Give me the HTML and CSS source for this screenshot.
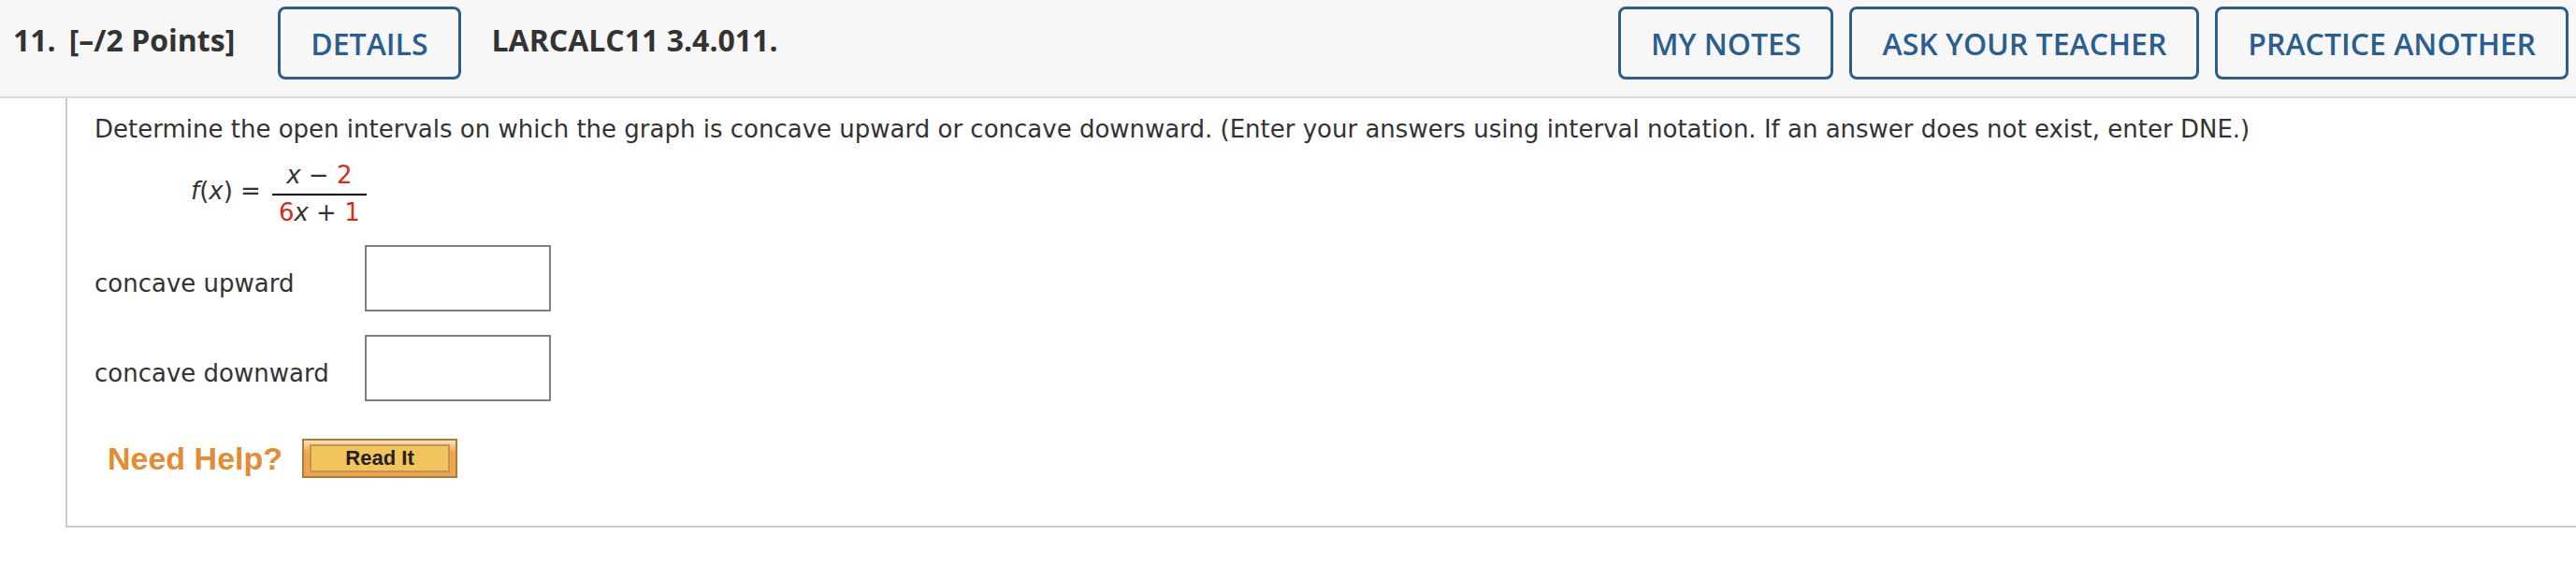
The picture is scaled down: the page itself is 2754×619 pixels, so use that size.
FILE: index.html
```html
<!DOCTYPE html>
<html lang="en">
<head>
    <meta charset="UTF-8">
    <meta name="viewport" content="width=device-width, initial-scale=1.0">
    <title>Question 11</title>
    <link rel="stylesheet" href="styles.css">
</head>
<body>
    <div class="question-header">
        <span class="q-number">11.</span>
        <span class="q-points">[&ndash;/2 Points]</span>
        <button class="header-btn details-btn">DETAILS</button>
        <span class="q-code">LARCALC11 3.4.011.</span>
        <div class="header-actions">
            <button class="header-btn">MY NOTES</button>
            <button class="header-btn">ASK YOUR TEACHER</button>
            <button class="header-btn">PRACTICE ANOTHER</button>
        </div>
    </div>

    <div class="question-body">
        <p class="prompt">Determine the open intervals on which the graph is concave upward or concave downward. (Enter your answers using interval notation. If an answer does not exist, enter DNE.)</p>

        <div class="formula">
            <span class="fx"><i>f</i>(<i>x</i>) =</span>
            <span class="fraction">
                <span class="num"><i>x</i> &minus; <span class="red">2</span></span>
                <span class="bar"></span>
                <span class="den"><span class="red">6</span><i>x</i> + <span class="red">1</span></span>
            </span>
        </div>

        <div class="answer-row">
            <label>concave upward</label>
            <input type="text" name="up">
        </div>
        <div class="answer-row">
            <label>concave downward</label>
            <input type="text" name="down">
        </div>

        <div class="help-row">
            <span class="need-help">Need Help?</span>
            <button class="read-it"><span>Read It</span></button>
        </div>
    </div>
</body>
</html>
```

FILE: styles.css
```css
/* Basic styling */
body {
    margin: 0;
    background: white;
    font-family: "DejaVu Sans", Verdana, sans-serif;
    color: #333;
}

/* Header bar */
.question-header {
    display: flex;
    align-items: flex-start;
    height: 96px;
    padding: 7px 8px 0 14px;
    background-color: #f7f7f7;
    border-bottom: 2px solid #dcdcdc;
    font-family: "Open Sans", sans-serif;
}
.q-number,
.q-points,
.q-code {
    font-size: 32px;
    font-weight: 700;
    color: #333;
    line-height: 78px;
    margin-top: -3px;
}
.q-points {
    margin-left: 14px;
}
.details-btn {
    margin-left: 46px;
}
.q-code {
    margin-left: 33px;
}
.header-actions {
    display: flex;
    gap: 17px;
    margin-left: auto;
}
.header-btn {
    height: 78px;
    padding: 0 32px;
    background: transparent;
    border: 3px solid #2b5e8f;
    border-radius: 8px;
    color: #2b5e8f;
    font-family: "Open Sans", sans-serif;
    font-size: 32px;
    font-weight: 600;
    cursor: pointer;
}

/* Question content */
.question-body {
    margin-left: 70px;
    padding: 17px 0 51px 29px;
    border-left: 2px solid #cccccc;
    border-bottom: 2px solid #cccccc;
    font-size: 26px;
}
.prompt {
    margin: 0;
    line-height: 32px;
}
.formula {
    display: flex;
    align-items: center;
    margin: 20px 0 22px 103px;
}
.fx {
    line-height: 26px;
    margin-bottom: 6px;
}
.fraction {
    display: inline-flex;
    flex-direction: column;
    align-items: center;
    margin-left: 12px;
    padding: 0 7px;
    line-height: 26px;
}
.bar {
    align-self: stretch;
    height: 2px;
    margin: 7px -7px 5px;
    background: black;
}
.red {
    color: #d22e1e;
}

.answer-row {
    display: flex;
    margin-bottom: 25px;
}
.answer-row label {
    width: 289px;
    padding-top: 26px;
    line-height: 30px;
}
.answer-row input {
    width: 199px;
    height: 71px;
    box-sizing: border-box;
    border: 2px solid #808080;
    margin: 0;
    font-size: 26px;
}

/* Need help */
.help-row {
    display: flex;
    align-items: center;
    margin: 40px 0 0 14px;
}
.need-help {
    font-family: "Liberation Sans", Arial, sans-serif;
    font-weight: 700;
    font-size: 34px;
    color: #e38c33;
}
.read-it {
    margin-left: 21px;
    width: 166px;
    height: 42px;
    padding: 4px 6px;
    box-sizing: border-box;
    border: 2px solid #a77b41;
    background: linear-gradient(#fbe3b5, #efa548 35%);
    cursor: pointer;
}
.read-it span {
    display: block;
    height: 30px;
    box-sizing: border-box;
    border: 2px solid #c0955a;
    background-color: #f3c35e;
    font-family: "Liberation Sans", Arial, sans-serif;
    font-weight: 700;
    font-size: 22px;
    line-height: 26px;
    color: #222;
}
```
